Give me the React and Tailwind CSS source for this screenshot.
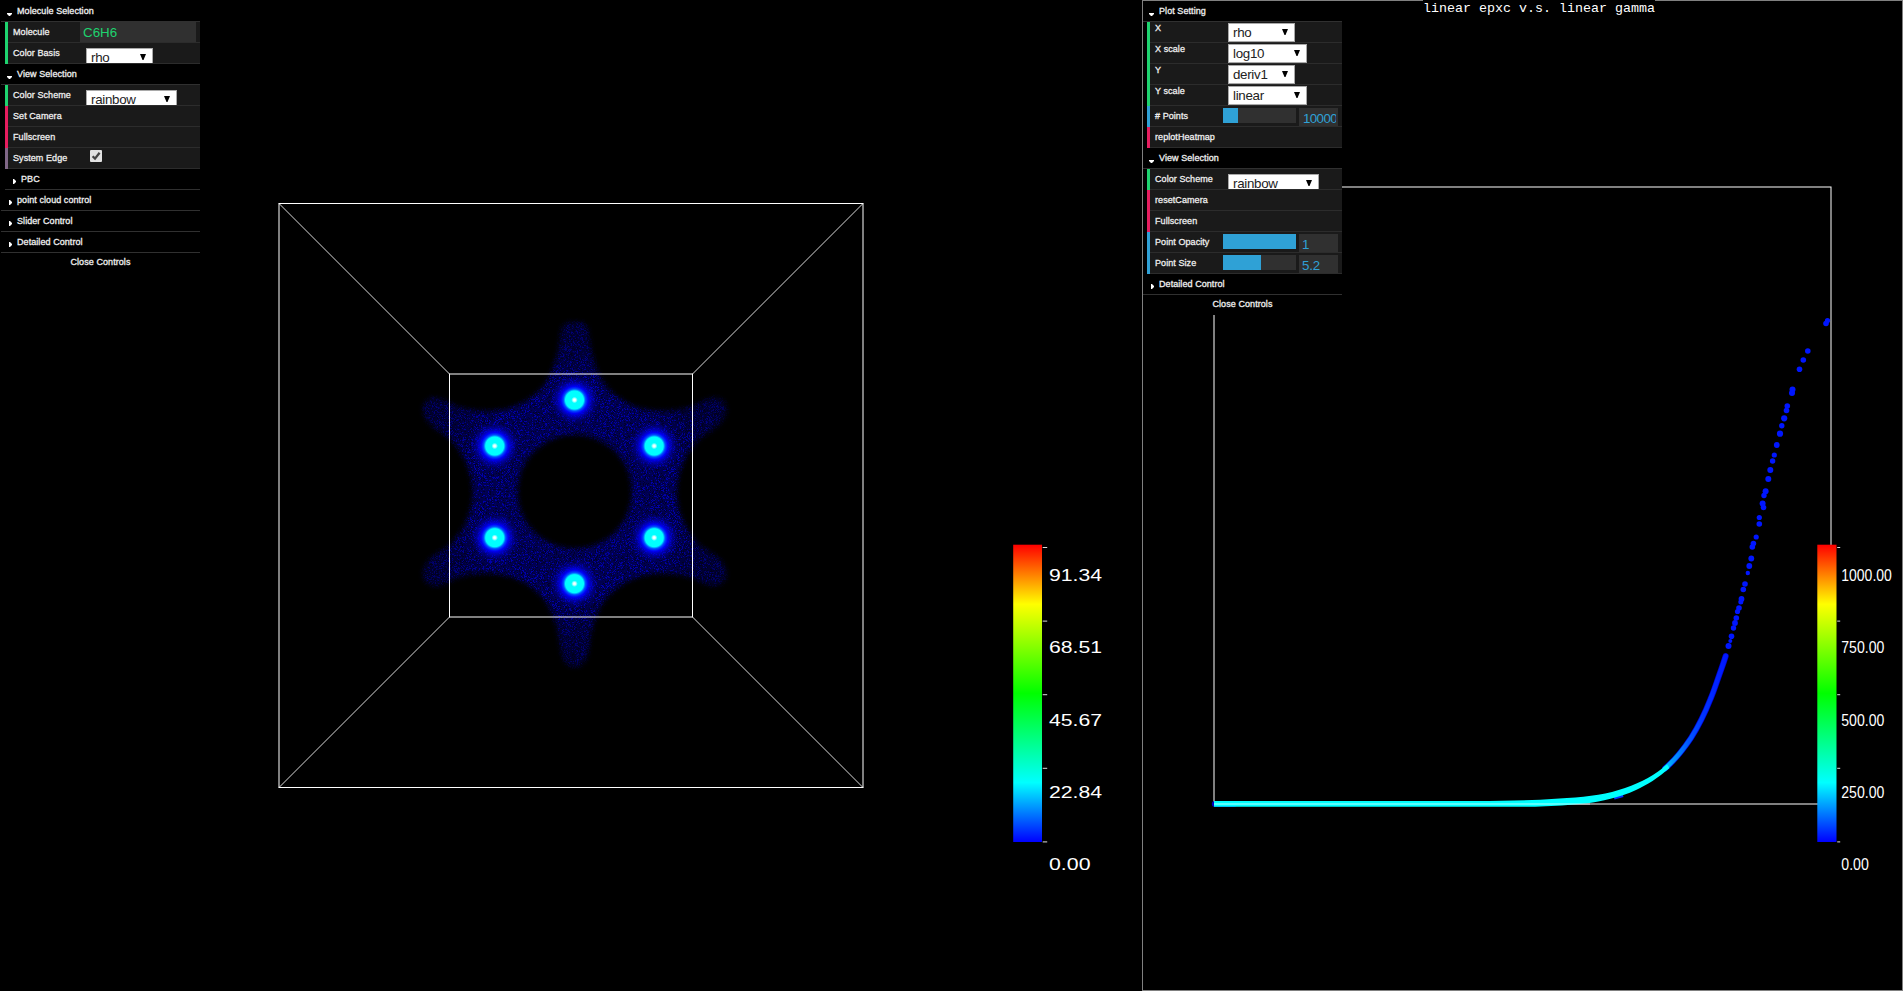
import React from "react";

const FIELD_FONT =
  "[text-shadow:none] [-webkit-text-stroke:0] text-[13.333px] font-['Liberation_Sans',Arial,sans-serif]";

const ACCENTS = {
  string: "border-[#1ed36f]",
  func: "border-[#e61d5f]",
  bool: "border-[#806787]",
  number: "border-[#2fa1d6]",
};

function Title({ children, nested = false }) {
  return (
    <div className={`h-[21px] border-b border-[#303030] flex bg-black pl-[6px] ${nested ? "ml-1" : ""}`}>
      {children}
    </div>
  );
}

function OpenFolder({ label }) {
  return (
    <Title>
      <svg className="w-[5px] h-[3px] mt-3 shrink-0" viewBox="0 0 5 3">
        <path d="M0 0H5V1L3 3H2L0 1Z" fill="#fff" />
      </svg>
      <span className="ml-[5px] leading-5">{label}</span>
    </Title>
  );
}

function ClosedFolder({ label, nested }) {
  return (
    <Title nested={nested}>
      <svg className="w-[3px] h-[5px] mt-[10px] ml-[2px] shrink-0" viewBox="0 0 3 5">
        <path d="M0 0H1L3 2V3L1 5H0Z" fill="#fff" />
      </svg>
      <span className="ml-[5px] leading-5">{label}</span>
    </Title>
  );
}

function Row({ type, label, raised = false, children }) {
  return (
    <div className={`ml-1 h-[21px] border-l-[3px] ${ACCENTS[type]}`}>
      <div className="h-[21px] border-b border-[#2c2c2c] bg-[#1a1a1a] flex overflow-hidden pl-[5px]">
        <span className={`shrink-0 w-[67px] whitespace-nowrap ${raised ? "leading-[12px]" : "leading-5"}`}>{label}</span>
        {children}
      </div>
    </div>
  );
}

function Select({ value, width, offset }) {
  return (
    <div
      className={`shrink-0 ml-[6px] h-[19px] bg-white border border-[#a9a9a9] flex items-center justify-between pl-1 pr-[6px] text-[#222] leading-[17px] tracking-[-0.3px] ${FIELD_FONT} ${width} ${offset}`}
    >
      <span className="-mt-px">{value}</span>
      <svg className="w-[6px] h-[6px] -mt-px" viewBox="0 0 6 6">
        <path d="M0 0H6L3.5 6H2.5Z" fill="#000" />
      </svg>
    </div>
  );
}

function Slider({ fill, value, wide = false }) {
  return (
    <>
      <div className="shrink-0 w-[73px] h-[15px] mt-[2px] ml-px bg-[#303030]">
        <div className={`h-full bg-[#2fa1d6] ${fill}`} />
      </div>
      <div
        className={`shrink-0 ml-[3px] mt-[2px] w-[39px] h-[18px] bg-[#303030] overflow-hidden text-[#2fa1d6] leading-[21px] pl-[3px] pr-[2px] ${FIELD_FONT} ${wide ? "tracking-[-0.6px]" : "tracking-[-0.2px]"}`}
      >
        <div className={`overflow-hidden w-full ${wide ? "pl-px" : ""}`}>{value}</div>
      </div>
    </>
  );
}

const GUI =
  "relative w-[199px] pt-px text-[9px] text-[#eee] tracking-[0.07px] [text-shadow:0_-1px_0_#111] [-webkit-text-stroke:0.3px_#eee] font-['Liberation_Sans',Arial,sans-serif]";

function CloseButton() {
  return <div className="h-5 bg-black text-center leading-[18px]">Close Controls</div>;
}

function MoleculeControls() {
  return (
    <div className={GUI}>
      <OpenFolder label="Molecule Selection" />
      <Row type="string" label="Molecule">
        <div className={`shrink-0 w-[116px] h-5 bg-[#303030] text-[#1ed36f] leading-[21px] pl-[3px] tracking-normal ${FIELD_FONT}`}>
          C6H6
        </div>
      </Row>
      <Row type="string" label="Color Basis">
        <Select value="rho" width="w-[67px]" offset="mt-[5px]" />
      </Row>
      <OpenFolder label="View Selection" />
      <Row type="string" label="Color Scheme">
        <Select value="rainbow" width="w-[91px]" offset="mt-[5px]" />
      </Row>
      <Row type="func" label="Set Camera" />
      <Row type="func" label="Fullscreen" />
      <Row type="bool" label="System Edge">
        <svg className="shrink-0 w-3 h-3 ml-[10px] mt-[2px]" viewBox="0 0 12 12">
          <rect x="0" y="0" width="12" height="12" rx="1" fill="#e2e2e2" />
          <path d="M2.6 6.2L5 8.6L9.6 2.8" fill="none" stroke="#444" strokeWidth="2.3" />
        </svg>
      </Row>
      <ClosedFolder label="PBC" nested />
      <ClosedFolder label="point cloud control" />
      <ClosedFolder label="Slider Control" />
      <ClosedFolder label="Detailed Control" />
      <CloseButton />
    </div>
  );
}

function PlotControls() {
  return (
    <div className={GUI}>
      <OpenFolder label="Plot Setting" />
      <Row type="string" label="X" raised>
        <Select value="rho" width="w-[67px]" offset="mt-px" />
      </Row>
      <Row type="string" label="X scale" raised>
        <Select value="log10" width="w-[79px]" offset="mt-px" />
      </Row>
      <Row type="string" label="Y" raised>
        <Select value="deriv1" width="w-[67px]" offset="mt-px" />
      </Row>
      <Row type="string" label="Y scale" raised>
        <Select value="linear" width="w-[79px]" offset="mt-px" />
      </Row>
      <Row type="number" label="# Points">
        <Slider fill="w-[15px]" value="10000" wide />
      </Row>
      <Row type="func" label="replotHeatmap" />
      <OpenFolder label="View Selection" />
      <Row type="string" label="Color Scheme">
        <Select value="rainbow" width="w-[91px]" offset="mt-[5px]" />
      </Row>
      <Row type="func" label="resetCamera" />
      <Row type="func" label="Fullscreen" />
      <Row type="number" label="Point Opacity">
        <Slider fill="w-full" value="1" />
      </Row>
      <Row type="number" label="Point Size">
        <Slider fill="w-[38px]" value="5.2" />
      </Row>
      <ClosedFolder label="Detailed Control" />
      <CloseButton />
    </div>
  );
}

/* Small seeded generator so that the point cloud is stable between renders. */
function makeRandom(seed) {
  let s = seed;
  return () => {
    s = (s * 1664525 + 1013904223) % 4294967296;
    return s / 4294967296;
  };
}

function cloud(count, seed) {
  const rnd = makeRandom(seed);
  let d = "";
  for (let i = 0; i < count; i++) {
    const x = Math.floor(418 + rnd() * 314);
    const y = Math.floor(318 + rnd() * 352);
    d += `M${x} ${y}h1v1h-1z`;
  }
  return d;
}

const BRIGHT = cloud(20000, 7);
const DIM = cloud(26000, 99);
const DARK = cloud(22000, 41);

const ATOMS = [
  [574.5, 400],
  [494.7, 446],
  [654.2, 446],
  [494.7, 537.7],
  [654.2, 537.7],
  [574.5, 583.7],
];

const UPPER =
  "M575 322H570Q562 322 561 332C558 352 556 364 549 377C539 397 515 411 489 411C468 411 455 406 446 401C438 397 431 396 426 401C420 408 424 417 429 423C437 432 446 434 452 441C465 455 473 475 473 492.3H517.5A57.5 57.5 0 0 1 575 434.5Z";

const LOWER =
  "M575 667H572Q565 665 562 655C558 633 556 620 549 607C539 588 515 573.5 489 573.5C468 573.5 455 578 446 583C438 587 431 587 426 582C420 575 424 566 429 560C437 551 446 550 452 543C465 529 473 509 473 492H517.5A57.5 56.5 0 0 0 575 548.5Z";

const MIRROR = "translate(1149.4 0) scale(-1 1)";

const BODY = [
  [UPPER, undefined],
  [UPPER, MIRROR],
  [LOWER, undefined],
  [LOWER, MIRROR],
];

function Legend({ id, x, width, tick, labels, labelX, widths }) {
  return (
    <g>
      <defs>
        <linearGradient id={id} x1="0" y1="0" x2="0" y2="1">
          <stop offset="0" stopColor="#f00" />
          <stop offset="0.2" stopColor="#ff0" />
          <stop offset="0.5" stopColor="#0f0" />
          <stop offset="0.8" stopColor="#0ff" />
          <stop offset="1" stopColor="#00f" />
        </linearGradient>
      </defs>
      <rect x={x} y="544.7" width={width} height="297.3" fill={`url(#${id})`} />
      {labels.map((label, i) => (
        <g key={label}>
          <rect x={x + width + 0.7} y={547 + i * 73.6} width={tick} height="1" fill="#ddd" />
          <text
            x={labelX}
            y={581.3 + i * 72.15}
            textLength={widths[i]}
            lengthAdjust="spacingAndGlyphs"
            fill="#fff"
            fontSize="17"
            fontFamily="'Liberation Sans', Arial, sans-serif"
          >
            {label}
          </text>
        </g>
      ))}
    </g>
  );
}

function MoleculeScene() {
  return (
    <svg className="absolute inset-0" width="1142" height="991" viewBox="0 0 1142 991">
      <defs>
        <filter id="soft" x="-10%" y="-10%" width="120%" height="120%">
          <feGaussianBlur stdDeviation="2.4" />
        </filter>
        <mask id="body" maskUnits="userSpaceOnUse" x="400" y="300" width="350" height="390">
          <g filter="url(#soft)" fill="#fff">
            {BODY.map(([d, t], i) => (
              <path key={i} d={d} transform={t} />
            ))}
          </g>
        </mask>
        <radialGradient id="shade" gradientUnits="userSpaceOnUse" cx="574.7" cy="492.3" r="172">
          <stop offset="0.35" stopColor="#00004e" />
          <stop offset="0.62" stopColor="#00004e" />
          <stop offset="0.8" stopColor="#000036" />
          <stop offset="1" stopColor="#00002a" />
        </radialGradient>
        <radialGradient id="fade" gradientUnits="userSpaceOnUse" cx="574.7" cy="492.3" r="172">
          <stop offset="0.35" stopColor="#0000b8" stopOpacity="0.75" />
          <stop offset="0.62" stopColor="#0000c0" stopOpacity="0.85" />
          <stop offset="0.8" stopColor="#0000a8" stopOpacity="0.6" />
          <stop offset="1" stopColor="#0000a0" stopOpacity="0.45" />
        </radialGradient>
        <radialGradient id="atom">
          <stop offset="0" stopColor="#fff" />
          <stop offset="0.05" stopColor="#dff" />
          <stop offset="0.13" stopColor="#0ff" />
          <stop offset="0.36" stopColor="#0ff" />
          <stop offset="0.44" stopColor="#0050ff" />
          <stop offset="0.54" stopColor="#0000ff" stopOpacity="0.95" />
          <stop offset="0.72" stopColor="#0000d8" stopOpacity="0.5" />
          <stop offset="1" stopColor="#000080" stopOpacity="0" />
        </radialGradient>
      </defs>
      <g mask="url(#body)">
        <rect x="400" y="300" width="350" height="390" fill="url(#shade)" />
        <path d={DIM} fill="#000078" fillOpacity="0.4" />
        <path d={DARK} fill="#000010" fillOpacity="0.55" />
        <path d={BRIGHT} fill="url(#fade)" />
      </g>
      {ATOMS.map(([x, y]) => (
        <circle key={`${x}-${y}`} cx={x} cy={y} r="25" fill="url(#atom)" />
      ))}
      <g fill="none" stroke="#fff">
        <rect x="279" y="203.5" width="584" height="584" />
        <rect x="449.5" y="374" width="243" height="243" />
        <path
          d="M279 203.5L449.5 374M863 203.5L692.5 374M279 787.5L449.5 617M863 787.5L692.5 617"
          strokeOpacity="0.85"
        />
      </g>
      <Legend
        id="rho-scale"
        x={1013.2}
        width={28.8}
        tick={4.5}
        labels={["91.34", "68.51", "45.67", "22.84", "0.00"]}
        labelX={1049}
        widths={[53, 53, 53, 53, 41.5]}
      />
    </svg>
  );
}

const DOTS = [
  [1826, 323.5, 2.8], [1827.5, 320.5, 2.6],
  [1807.8, 351, 2.8], [1803.3, 360, 2.8], [1799.5, 369.3, 2.8],
  [1792.5, 389.5, 3], [1792, 393, 3],
  [1787.3, 406, 2.8], [1786.5, 410.5, 2.8], [1784.2, 418.3, 3.1],
  [1781.8, 425.7, 2.7], [1780, 433.7, 3.1], [1776.8, 445, 2.9],
  [1774.3, 455, 2.6], [1772.6, 461, 2.7], [1770.3, 470, 3], [1768.3, 479, 3],
  [1765.6, 491.3, 3], [1764, 495.5, 2.7], [1762.6, 503.5, 3], [1763.5, 507.5, 2.8],
  [1759.3, 517.5, 2.6], [1759.3, 524, 2.8], [1756.2, 537, 2.6],
  [1753.4, 543.5, 2.8], [1752.3, 547, 2.8], [1751.3, 558.5, 2.9],
  [1749.3, 566, 2.9], [1747.8, 573, 2.2],
  [1745, 584, 2.8], [1743.3, 589.5, 2.8], [1741.5, 599, 2.9], [1740.8, 602, 2.5],
  [1739, 608, 2.8], [1737.5, 611.5, 2.6], [1736.3, 618, 2.8], [1735, 623, 2.9],
  [1733.5, 628, 2.7], [1731.5, 636.3, 2.8], [1730.3, 641, 2], [1728.5, 646, 3],
];

const TAIL =
  "M1725.7 656Q1723.5 663 1721 670C1717 681 1714 691 1710.5 699C1703 718 1698 727 1691 738C1683 750 1675 760 1665 768.5";

function PlotScene() {
  return (
    <svg className="absolute -left-px -top-px" width="761" height="991" viewBox="1142 0 761 991">
      <defs>
        <linearGradient id="heat" gradientUnits="userSpaceOnUse" x1="1650" y1="0" x2="1726" y2="0">
          <stop offset="0" stopColor="#0ff" />
          <stop offset="0.15" stopColor="#00e8ff" />
          <stop offset="0.3" stopColor="#0098ff" />
          <stop offset="0.5" stopColor="#0058ff" />
          <stop offset="0.7" stopColor="#0034ff" />
          <stop offset="1" stopColor="#0018ff" />
        </linearGradient>
      </defs>
      <rect x="1214" y="187" width="617" height="617" fill="none" stroke="#fff" />
      <g fill="#0016ff">
        {DOTS.map(([x, y, r], i) => (
          <circle key={i} cx={x} cy={y} r={r} />
        ))}
      </g>
      <path d="M1614 797.5L1623 795" stroke="#0030ff" strokeWidth="4" fill="none" />
      <path d={TAIL} fill="none" stroke="#0000d0" strokeWidth="6" strokeLinecap="round" />
      <path d={TAIL} fill="none" stroke="url(#heat)" strokeWidth="4.6" strokeLinecap="round" />
      <path d="M1214.8 804H1234" stroke="#0000c0" strokeWidth="6" strokeLinecap="round" />
      <path
        d="M1214 801H1490L1540 799.8L1567 798C1590 796.5 1608 794 1625 788C1642 782 1655 775 1667 764.5L1669.5 768C1658 778 1647 785 1636 790C1620 797.5 1600 801.5 1588 803.3L1562 805.6L1535 806.8H1214Z"
        fill="#0ff"
      />
      <path d="M1214 804H1590" stroke="#fff" strokeOpacity="0.35" strokeWidth="2" />
      <Legend
        id="count-scale"
        x={1817.3}
        width={19.2}
        tick={3}
        labels={["1000.00", "750.00", "500.00", "250.00", "0.00"]}
        labelX={1841.3}
        widths={[50.5, 43, 43, 43, 27.5]}
      />
    </svg>
  );
}

export default function App() {
  return (
    <div className="w-[1903px] h-[991px] bg-black flex overflow-hidden">
      <section className="relative w-[1142px] h-full px-px">
        <MoleculeScene />
        <MoleculeControls />
      </section>
      <section className="relative w-[761px] h-full border border-[#808080]">
        <PlotScene />
        <div className="absolute left-[280px] -top-px h-[17px] pt-px bg-black text-white whitespace-pre text-[13.333px] leading-[16px] font-['Liberation_Mono','Courier_New',monospace]">
          linear epxc v.s. linear gamma
        </div>
        <div className="-mt-px">
          <PlotControls />
        </div>
      </section>
    </div>
  );
}
